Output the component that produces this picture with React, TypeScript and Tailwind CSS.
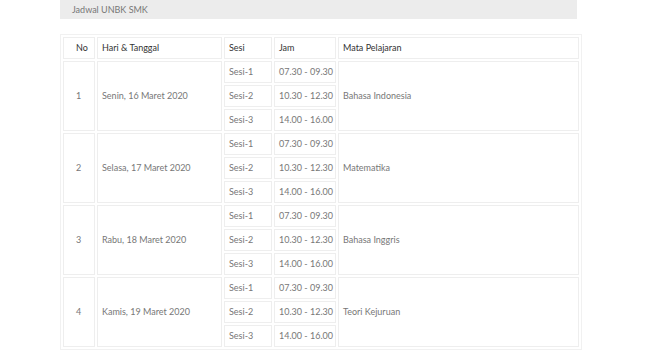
const JADWAL = [
  { no: 1, hari: 'Senin, 16 Maret 2020', mapel: 'Bahasa Indonesia' },
  { no: 2, hari: 'Selasa, 17 Maret 2020', mapel: 'Matematika' },
  { no: 3, hari: 'Rabu, 18 Maret 2020', mapel: 'Bahasa Inggris' },
  { no: 4, hari: 'Kamis, 19 Maret 2020', mapel: 'Teori Kejuruan' },
]

const SESI = [
  { sesi: 'Sesi-1', jam: '07.30 - 09.30' },
  { sesi: 'Sesi-2', jam: '10.30 - 12.30' },
  { sesi: 'Sesi-3', jam: '14.00 - 16.00' },
]

const cell = 'border border-[#eeeeee] h-[22px] px-[4px] align-middle whitespace-nowrap'

export default function App() {
  return (
    <div
      className="min-h-screen bg-white pl-[60px] text-[9px] text-[#777]"
      style={{ fontFamily: 'Lato, "Open Sans", sans-serif' }}
    >
      <div className="w-[517px] h-[19px] bg-[#ececec] px-[12px] flex items-center text-[#777]">
        Jadwal UNBK SMK
      </div>

      <table className="mt-[15px] w-[521px] table-fixed border-separate border-spacing-[2px] border border-[#f1f1f1]">
        <colgroup>
          <col className="w-[32px]" />
          <col className="w-[125px]" />
          <col className="w-[48px]" />
          <col className="w-[62px]" />
          <col className="w-[241px]" />
        </colgroup>
        <thead>
          <tr className="text-left text-[#333]">
            <th className={`${cell} font-normal pl-[12px]`}>No</th>
            <th className={`${cell} font-normal`}>Hari &amp; Tanggal</th>
            <th className={`${cell} font-normal`}>Sesi</th>
            <th className={`${cell} font-normal`}>Jam</th>
            <th className={`${cell} font-normal`}>Mata Pelajaran</th>
          </tr>
        </thead>
        <tbody>
          {JADWAL.map((row) =>
            SESI.map((s, i) => (
              <tr key={`${row.no}-${s.sesi}`}>
                {i === 0 && (
                  <>
                    <td rowSpan={3} className={`${cell} pl-[12px]`}>
                      {row.no}
                    </td>
                    <td rowSpan={3} className={cell}>
                      {row.hari}
                    </td>
                  </>
                )}
                <td className={cell}>{s.sesi}</td>
                <td className={cell}>{s.jam}</td>
                {i === 0 && (
                  <td rowSpan={3} className={cell}>
                    {row.mapel}
                  </td>
                )}
              </tr>
            ))
          )}
        </tbody>
      </table>
    </div>
  )
}
